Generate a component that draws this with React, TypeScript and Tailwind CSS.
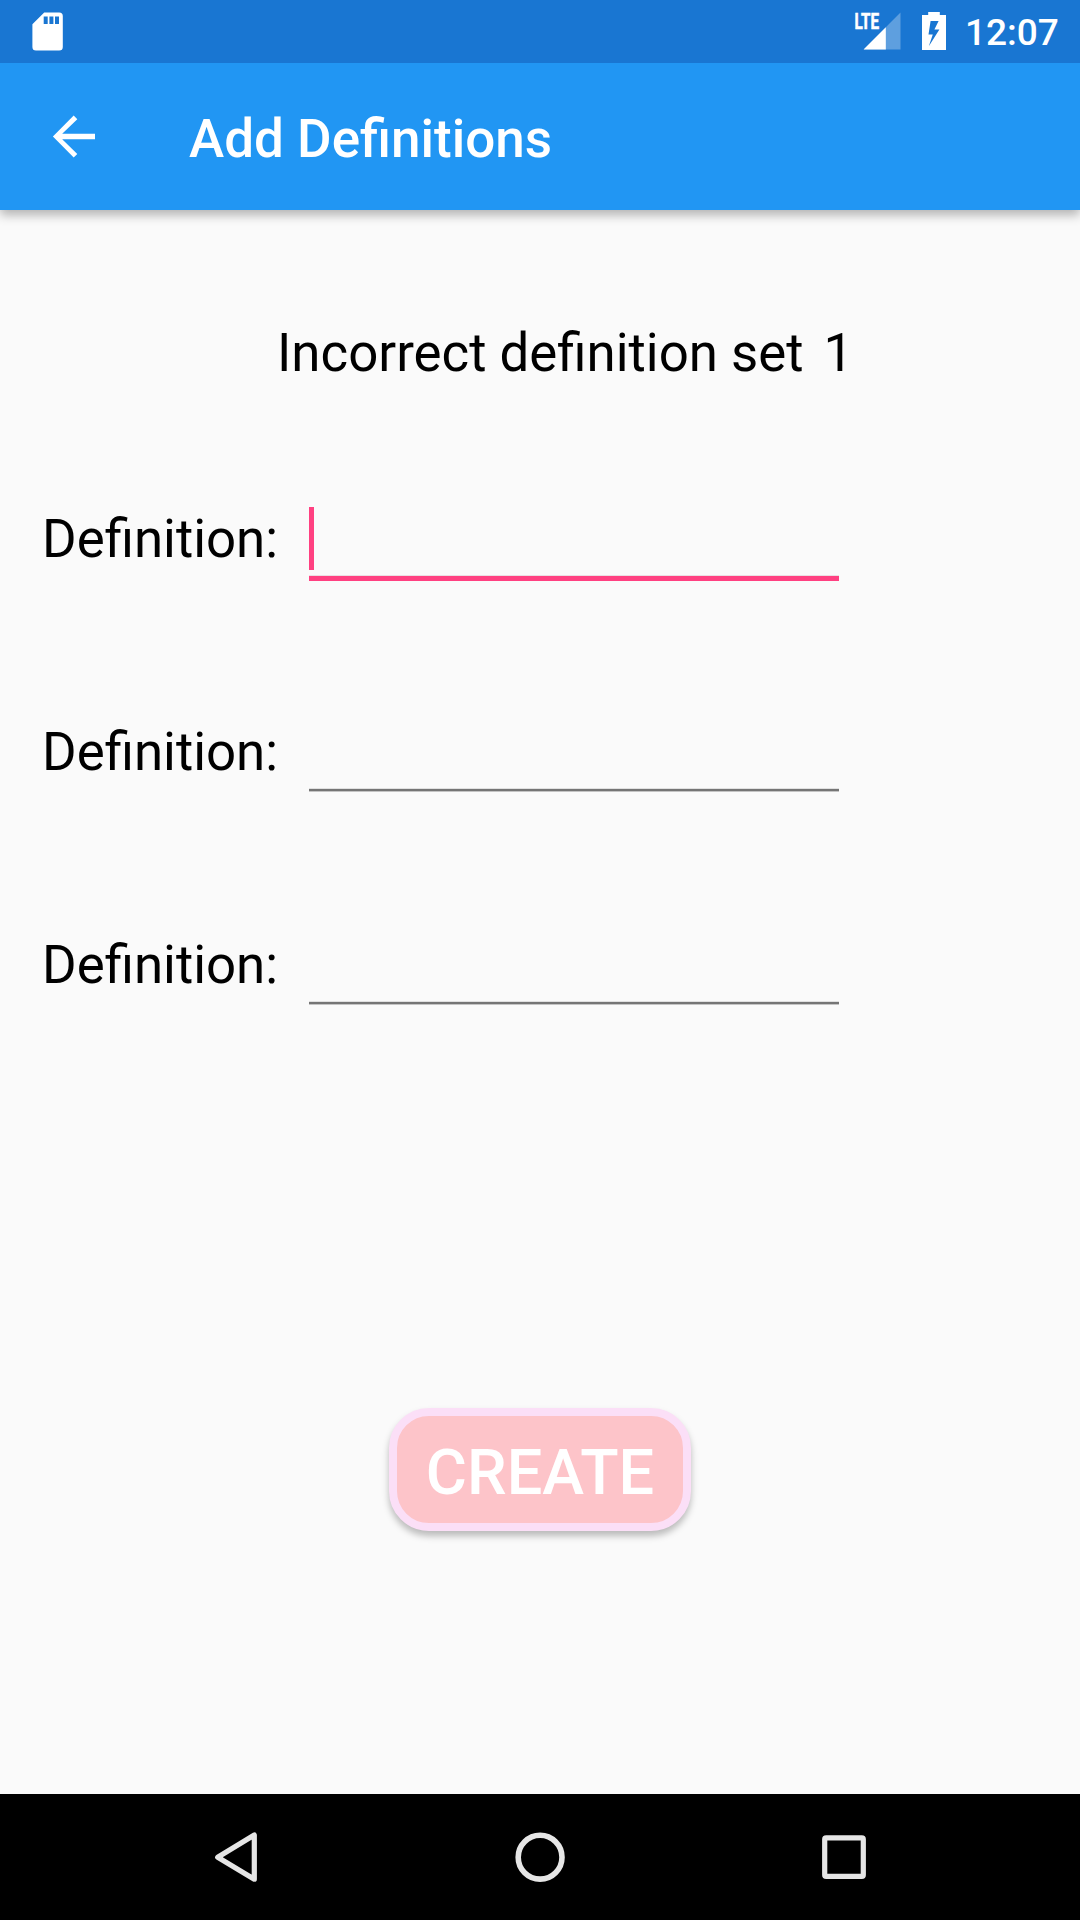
import React from "react";

function StatusBar() {
  return (
    <div className="relative z-20 flex h-[63px] shrink-0 items-start bg-[#1976d2] text-white">
      <svg className="mt-3 ml-8 h-[39px] w-[31px]" viewBox="0 0 31 39">
        <path
          fillRule="evenodd"
          fill="#fff"
          d="M12.2 .5H27.2A3.6 3.6 0 0 1 30.8 4.1V35A3.6 3.6 0 0 1 27.2 38.6H4A3.6 3.6 0 0 1 .4 35V12.2ZM11.7 4.4V12H15.7V4.4ZM17.4 4.4V12H21.4V4.4ZM23 4.4V12H27V4.4Z"
        />
      </svg>
      <svg className="mt-3 ml-auto h-[38px] w-[49px] overflow-visible" viewBox="0 0 49 38">
        <path d="M48.5 .5V37.4H11.6Z" fill="#fff" fillOpacity=".3" />
        <path d="M33.8 15.2V37.4H11.6Z" fill="#fff" />
        <text
          x="2.5"
          y="17"
          textLength="24.5"
          lengthAdjust="spacingAndGlyphs"
          fontFamily="Roboto, sans-serif"
          fontWeight="700"
          fontSize="21.8"
          fill="#fff"
          stroke="#fff"
          strokeWidth=".6"
        >
          LTE
        </text>
      </svg>
      <svg className="mt-3 ml-[21px] h-[38px] w-6" viewBox="0 0 24 38">
        <path
          fillRule="evenodd"
          fill="#fff"
          d="M6.2 0H17.8V3H24V38H0V3H6.2ZM8.6 9L6.5 22.5H10.8L6.8 34.2L17.4 17.6H12.4L16.6 9Z"
        />
      </svg>
      <span className="mr-[20px] ml-[19px] w-[95px] pt-[11px] text-[37px] leading-[44px] font-medium">12:07</span>
    </div>
  );
}

function AppBar() {
  return (
    <header className="relative z-10 flex h-[147px] shrink-0 items-start bg-[#2196f3] text-white shadow-[0_5px_10px_rgba(0,0,0,0.29)]">
      <svg className="mt-[52px] ml-[52px] h-[43px] w-[43px]" viewBox="0 0 43 43">
        <path d="M43 18.8V24.2H10.2L25.3 39L21.7 42.6L.9 21.5L21.7 .6L25.3 4.2L10.2 18.8Z" fill="#fff" />
      </svg>
      <h1 className="mt-[45px] ml-[94px] text-[53px] leading-[62px] font-medium">Add Definitions</h1>
    </header>
  );
}

function DefinitionRow({ focused = false }: { focused?: boolean }) {
  return (
    <label className="flex h-[213px] items-start">
      <span className="w-[267px] text-[52.8px] leading-[62px]">Definition:</span>
      {focused ? (
        <span className="-mt-px flex h-[74px] w-[530px] flex-col justify-between">
          <span className="h-[63px] w-[5px] bg-[#ff4081]" />
          <span className="h-[6px] border-t border-[#eadfe2] bg-[#ff4081]" />
        </span>
      ) : (
        <span className="mt-[67px] h-1 w-[530px] border-t border-b border-t-[#e0e0e0] border-b-[#c4c4c4] bg-[#757575]" />
      )}
    </label>
  );
}

function NavBar() {
  return (
    <nav className="flex h-[126px] shrink-0 items-center justify-between bg-black px-[210px]">
      <svg className="h-[52px] w-[52px]" viewBox="0 0 52 52">
        <path d="M7.7 26.3L44.3 4V48.2Z" fill="none" stroke="#e6e6e6" strokeWidth="5.2" strokeLinejoin="round" />
      </svg>
      <svg className="h-[52px] w-[52px]" viewBox="0 0 52 52">
        <circle cx="26.1" cy="26.2" r="21.9" fill="none" stroke="#e6e6e6" strokeWidth="5.6" />
      </svg>
      <svg className="h-[52px] w-[52px]" viewBox="0 0 52 52">
        <rect x="6.7" y="6.8" width="38.6" height="38.6" rx="1.5" fill="none" stroke="#e6e6e6" strokeWidth="5.2" />
      </svg>
    </nav>
  );
}

export default function App() {
  return (
    <div className="flex h-[1920px] w-[1080px] flex-col overflow-hidden bg-[#fafafa] font-['Roboto',sans-serif] text-black">
      <StatusBar />
      <AppBar />
      <main className="flex grow flex-col">
        <div className="mt-28 ml-[277px] flex gap-5 text-[52.8px] leading-[62px]">
          <span>Incorrect definition set</span>
          <span>1</span>
        </div>
        <form className="mt-[124px] ml-[42px]">
          <DefinitionRow focused />
          <DefinitionRow />
          <DefinitionRow />
        </form>
        <button
          type="button"
          className="mt-[261px] ml-[389px] flex h-[123px] w-[302px] items-start justify-center rounded-[40px] border-8 border-[#fbdff7] bg-[#fdc4c9] pt-[20px] text-[63px] leading-[74px] font-medium text-white shadow-[0_5px_7px_rgba(0,0,0,0.26)]"
        >
          CREATE
        </button>
      </main>
      <NavBar />
    </div>
  );
}
